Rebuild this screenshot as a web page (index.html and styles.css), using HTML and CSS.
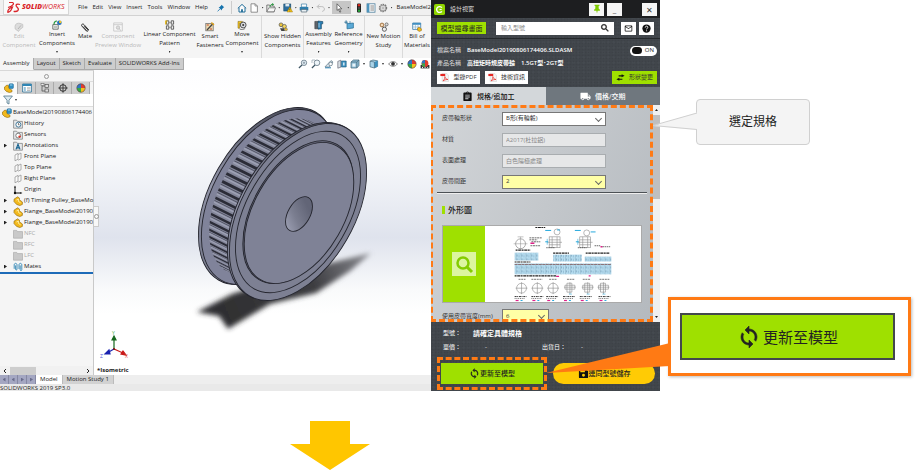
FILE: index.html
```html
<!DOCTYPE html>
<html lang="zh-Hant">
<head>
<meta charset="utf-8">
<title>更新至模型</title>
<link rel="stylesheet" href="styles.css">
</head>
<body>
<svg class="defs" aria-hidden="true">
  <defs>
    <symbol id="i-part" viewBox="0 0 10 10"><path d="M1 3.2 4.6.8 6.4 2v1.8L9.4 6v2.4L6.8 9.6 3.6 8.4 1 5.6Z" fill="#f2b91d" stroke="#8d6508" stroke-width=".6"/><path d="M3.4 4 5.4 3v2.4l2.2 1.4" fill="none" stroke="#fff1a8" stroke-width=".9"/></symbol>
    <symbol id="i-asm" viewBox="0 0 10 10"><path d="M.5 4 3 2l2 1v2.4l3 1.8v1.6L5.4 9.6 2.4 8.4.5 6.4Z" fill="#f2b91d" stroke="#8d6508" stroke-width=".6"/><rect x="5" y=".8" width="4.4" height="4.8" rx="1" fill="#2f8fc4" stroke="#145b85" stroke-width=".5"/><path d="M6 2h2.4" stroke="#bfe6fa" stroke-width=".8"/></symbol>
    <symbol id="i-insert" viewBox="0 0 10 10"><path d="M.8 4.6h5.4v4.6H.8z" fill="#eef3ee" stroke="#555" stroke-width=".8"/><path d="M2 4.4C2 2 3.4 1 5 1" fill="none" stroke="#2c9b3f" stroke-width="1.2"/><circle cx="7.4" cy="2.8" r="2.3" fill="#1f6fc0"/><circle cx="8.2" cy="2" r="1.2" fill="#f5c722"/><path d="M2 7h3" stroke="#777" stroke-width=".8"/></symbol>
    <symbol id="i-clip" viewBox="0 0 10 10"><path d="M8.8 8 4 2.6C2.8 1.2.8 2.6 1.8 4l4.6 5c1 .9 2.2 0 1.4-1.2L4.2 3.8M3 4.6l3.6 4" fill="none" stroke="#333" stroke-width="1"/></symbol>
    <symbol id="i-editc" viewBox="0 0 10 10"><path d="M1 4.4C1 1.6 4 .8 6 1.4l2.8 1v3L6 7.4 4.6 9.4 1.2 7Z" fill="#dcdcdc" stroke="#bbb" stroke-width=".7"/><path d="m4 7 3-3.6" stroke="#aaa" stroke-width=".8"/></symbol>
    <symbol id="i-preview" viewBox="0 0 10 10"><path d="M.7.9h8.6v8.2H.7zM.7 2.7h8.6" fill="#f7f7f7" stroke="#c4c4c4" stroke-width=".8"/><circle cx="5" cy="5.6" r="1.7" fill="#ddd" stroke="#bdbdbd" stroke-width=".8"/><path d="m6.2 6.8 1.6 1.6" stroke="#bbb"/></symbol>
    <symbol id="i-linear" viewBox="0 0 10 10"><g fill="#eee" stroke="#444" stroke-width=".8"><path d="M1.4.8h2.4v3.4H1.4zM6.2.8h2.4v3.4H6.2zM1.4 5.8h2.4v3.4H1.4zM6.2 5.8h2.4v3.4H6.2z"/></g><path d="M.8 4.4V1h1.6" stroke="#e6b400" fill="none" stroke-width="1.2"/><path d="M3.6 2.5h2.8M3.6 7.5h2.8" stroke="#777" stroke-width=".6"/></symbol>
    <symbol id="i-smart" viewBox="0 0 10 10"><rect x=".8" y="1.6" width="7.4" height="7.2" fill="#ecd9b0" stroke="#666" stroke-width=".7"/><path d="M2 8 7.6 2" stroke="#444" stroke-width="1.3"/><path d="M1.8 3h2M5 7h2" stroke="#c24a2a" stroke-width="1"/><path d="m6.4.6 2.6 2.4" stroke="#e3a51a" stroke-width="1.3"/></symbol>
    <symbol id="i-move" viewBox="0 0 10 10"><path d="M1 1.4h4.4v2H2.6v4.8H1z" fill="#f5c722" stroke="#77590a" stroke-width=".5"/><circle cx="6.2" cy="5" r="2.9" fill="#d8dbe0" stroke="#333" stroke-width=".8"/><circle cx="6.2" cy="5" r="1" fill="#333"/><path d="M2.6 9c2 .8 4 .6 5.6-.6" stroke="#555" fill="none" stroke-width=".8"/></symbol>
    <symbol id="i-hidden" viewBox="0 0 10 10"><circle cx="3" cy="2.8" r="1.9" fill="#e9c23b" stroke="#555" stroke-width=".7"/><circle cx="6.4" cy="4.4" r="2" fill="#f4d65a" stroke="#555" stroke-width=".7"/><path d="M2 6.2h4l1 2.8H3.4Z" fill="#444"/><circle cx="8" cy="7.4" r="1.4" fill="#f0bd2a" stroke="#666" stroke-width=".5"/></symbol>
    <symbol id="i-feat" viewBox="0 0 10 10"><path d="M.8 1.4h3v7.4h-3z" fill="#5e646c" stroke="#333" stroke-width=".5"/><path d="m4 1 4.8.6v2.2L7.4 4v4.8L4 9.2Z" fill="#2b7fb4" stroke="#143f5c" stroke-width=".6"/><path d="M5 3v4.6" stroke="#b8dcf0" stroke-width=".9"/></symbol>
    <symbol id="i-ref" viewBox="0 0 10 10"><path d="M3 3.6 9.4 3v5L3 8.8Z" fill="#5aa9d6" stroke="#246b93" stroke-width=".7"/><path d="M.4 2.2h3.4M2.1.4v3.6" stroke="#246b93" stroke-width=".9"/><path d="M6 1v3" stroke="#246b93" stroke-width=".6"/></symbol>
    <symbol id="i-motion" viewBox="0 0 10 10"><circle cx="3" cy="3" r="1.9" fill="#f4d9b8" stroke="#8e5a25" stroke-width=".8"/><circle cx="7.6" cy="2.4" r="1.5" fill="#ddd" stroke="#555" stroke-width=".7"/><circle cx="5.4" cy="7.2" r="2.1" fill="#eee" stroke="#555" stroke-width=".9"/><path d="m3.6 4.6 1 1.4M7 3.8l-.8 2" stroke="#555" stroke-width=".7"/></symbol>
    <symbol id="i-bill" viewBox="0 0 10 10"><path d="M.7 1h8v6.4h-8z" fill="#fff" stroke="#3679a8" stroke-width=".8"/><path d="M.7 1h8v1.8h-8z" fill="#3f8fc2"/><path d="M.7 5h8M3.4 2.6v4.8M6 2.6v4.8" stroke="#7aa9c8" stroke-width=".6"/><path d="M5.6 6 7 5.2l2.4 1.6v1.8L7.4 9.4 5.6 8.4Z" fill="#f2b91d" stroke="#8d6508" stroke-width=".5"/></symbol>
    <symbol id="i-home" viewBox="0 0 10 10"><path d="M.8 5.4 5 1.4l4.2 4M2 4.6V9h6V4.6" fill="#fff" stroke="#1d6a96" stroke-width="1"/><path d="M4.1 9V6.2h1.8V9" fill="#1d6a96"/></symbol>
    <symbol id="i-new" viewBox="0 0 10 10"><path d="M2 .8h4.2L8.4 3v6.2H2z" fill="#fff" stroke="#777" stroke-width=".8"/><path d="M6 .8V3h2.4" fill="none" stroke="#777" stroke-width=".7"/></symbol>
    <symbol id="i-open" viewBox="0 0 10 10"><path d="M.8 2h2.8l.8 1h3.8v5.8H.8z" fill="#e7e7e7" stroke="#666" stroke-width=".8"/><path d="m.8 8.8 2-4h6.8L8 8.8z" fill="#f7f7f7" stroke="#666" stroke-width=".7"/><path d="M4 4c0-2.2 1.4-2.8 3-2.6M6.4.4l1.2 1-1.2 1.2" fill="none" stroke="#24933a" stroke-width="1"/></symbol>
    <symbol id="i-save" viewBox="0 0 10 10"><rect x=".8" y="1" width="7" height="7" fill="#2c6e9e" stroke="#174866" stroke-width=".6"/><path d="M2.4 1h3.8v2.4H2.4z" fill="#dfeaf2"/><path d="M6.8 4 9.6 9H4z" fill="#f7c51c" stroke="#8a6a00" stroke-width=".4"/><path d="M6.8 5.6v1.6M6.8 7.8v.6" stroke="#222" stroke-width=".6"/></symbol>
    <symbol id="i-print" viewBox="0 0 10 10"><path d="M2.4 1h5.2v3H2.4z" fill="#fff" stroke="#3b7ea8" stroke-width=".7"/><path d="M.7 4h8.6v3.4H.7z" fill="#2f7fae"/><path d="M2.2 6.4h5.6V9H2.2z" fill="#e9f0f4" stroke="#3a5160" stroke-width=".6"/></symbol>
    <symbol id="i-undo" viewBox="0 0 10 10"><path d="M3.4 1.4 1.2 3.6l2.2 2.2M1.4 3.6h4.4c3.4 0 3.4 4.6.4 4.8" fill="none" stroke="#bdbdbd" stroke-width="1"/></symbol>
    <symbol id="i-cursor" viewBox="0 0 10 10"><path d="m3 .8 4.8 5H5.4l1.4 3-1 .4-1.4-3L3 7.4Z" fill="#fff" stroke="#444" stroke-width=".7"/></symbol>
    <symbol id="i-light" viewBox="0 0 10 10"><rect x="3" y=".4" width="4" height="9.2" rx="1" fill="#222"/><circle cx="5" cy="2.2" r="1.2" fill="#e02b20"/><circle cx="5" cy="5" r="1" fill="#555"/><circle cx="5" cy="7.8" r="1.2" fill="#27a43a"/></symbol>
    <symbol id="i-list" viewBox="0 0 10 10"><rect x="1" y=".8" width="8" height="8.4" fill="#fff" stroke="#4c7f9d" stroke-width=".8"/><path d="M1 .8h2.4v8.4H1z" fill="#4c94bd"/><path d="M4.4 3H8M4.4 5H8M4.4 7H8" stroke="#666" stroke-width=".8"/></symbol>
    <symbol id="i-gear" viewBox="0 0 10 10"><circle cx="5" cy="5" r="3.6" fill="none" stroke="#777" stroke-width="1.2" stroke-dasharray="1.6 .7"/><circle cx="5" cy="5" r="2.8" fill="#f2f2f2" stroke="#777" stroke-width=".7"/><circle cx="5" cy="5" r="1.1" fill="#fff" stroke="#777" stroke-width=".6"/></symbol>
    <symbol id="i-zoomfit" viewBox="0 0 10 10"><circle cx="6" cy="3.8" r="2.7" fill="#e3eef5" stroke="#667784" stroke-width=".8"/><path d="M4 6 .9 9" stroke="#3e5665" stroke-width="1.2"/><path d="M4.8 3.8h2.4M6 2.6V5" stroke="#667784" stroke-width=".6"/></symbol>
    <symbol id="i-zoomarea" viewBox="0 0 10 10"><path d="M1 1h3M1 1v3" stroke="#8fa2ae" stroke-width=".7"/><circle cx="6" cy="3.8" r="2.8" fill="#eef5f9" stroke="#667784" stroke-width=".8"/><path d="M4 6 .9 9" stroke="#3e5665" stroke-width="1.2"/></symbol>
    <symbol id="i-prev" viewBox="0 0 10 10"><path d="M1 7.8 7 1.6l2 1.4-4 5.2Z" fill="#d9e6ee" stroke="#5d7482" stroke-width=".7"/><path d="M1 8.8h6" stroke="#2f7fae" stroke-width="1"/><circle cx="6.6" cy="5" r="1.8" fill="#fff" stroke="#5d7482" stroke-width=".7"/></symbol>
    <symbol id="i-section" viewBox="0 0 10 10"><path d="m.8 2.400 3-1.200v7L.8 9.200Z" fill="#d7dde2" stroke="#556" stroke-width=".6"/><path d="M4.4 2h4.8v6H4.4z" fill="#3d91bf" stroke="#1d5a7c" stroke-width=".6"/><path d="M6 3.4h1.6v3H6z" fill="#cfe6f2"/></symbol>
    <symbol id="i-cube" viewBox="0 0 10 10"><path d="m1 3 2.400-2H9v5.600L6.800 9H1z" fill="#8dbdd6" stroke="#446577" stroke-width=".7"/><path d="M1 3h5.800v6M6.800 3 9 1" fill="none" stroke="#446577" stroke-width=".7"/><path d="M2.400 4.600h3v3h-3z" fill="#e9f4f9"/></symbol>
    <symbol id="i-solid" viewBox="0 0 10 10"><path d="M1 2.200 4 1l4.600.8v5.600L5.400 9 1 7.800Z" fill="#a9d3e8" stroke="#446577" stroke-width=".7"/><path d="M5.400 3 8.600 1.800v5.600L5.400 9Z" fill="#3d91bf"/><path d="m1 2.200 4.400.8v6" fill="none" stroke="#446577" stroke-width=".6"/></symbol>
    <symbol id="i-eye" viewBox="0 0 10 10"><path d="M.6 5C3 1.8 7 1.8 9.4 5 7 8 3 8 .6 5Z" fill="#fff" stroke="#555" stroke-width=".7"/><circle cx="5" cy="4.8" r="1.9" fill="#333"/></symbol>
    <symbol id="i-ball" viewBox="0 0 10 10"><circle cx="5" cy="5" r="4.2" fill="#e23c2e"/><path d="M5 .8A4.2 4.2 0 0 0 .8 5H5Z" fill="#2f78c4"/><path d="M.8 5A4.2 4.2 0 0 0 5 9.2V5Z" fill="#39a84a"/><path d="M5 9.2A4.2 4.2 0 0 0 9.2 5H5Z" fill="#f2c11f"/><circle cx="5" cy="5" r="4.2" fill="none" stroke="#444" stroke-width=".5"/></symbol>
    <symbol id="i-scene" viewBox="0 0 10 10"><path d="M.6 6h8.8v3.4H.6z" fill="#333"/><circle cx="5" cy="4.4" r="3.4" fill="#e23c2e"/><path d="M5 1a3.4 3.4 0 0 0-3.4 3.4H5Z" fill="#2f78c4"/><path d="M1.6 4.4A3.4 3.4 0 0 0 5 7.8V4.4Z" fill="#39a84a"/><path d="M2 8.4h1M4.6 8.4h1M7.2 8.4h1" stroke="#fff" stroke-width="1"/></symbol>
    <symbol id="i-props" viewBox="0 0 10 10"><path d="M.6 1h8.8v8H.6z" fill="#fff" stroke="#2b6e94" stroke-width=".8"/><path d="M.6 1h8.8v2H.6z" fill="#2f86b5"/><path d="M1.8 4.4h2v1h-2zM1.8 6.6h2v1h-2z" fill="#2f86b5"/><path d="M5 5h3.4M5 7.2h3.4" stroke="#888" stroke-width=".8"/></symbol>
    <symbol id="i-config" viewBox="0 0 10 10"><path d="M2 .8v7.4M2 3h3M2 8h3" fill="none" stroke="#555" stroke-width=".8"/><rect x="1" y=".5" width="3" height="2" fill="#eee" stroke="#555" stroke-width=".5"/><rect x="5" y="1.4" width="3.6" height="3" fill="#ddd" stroke="#555" stroke-width=".7"/><rect x="5" y="6" width="3.6" height="3" fill="#ddd" stroke="#555" stroke-width=".7"/></symbol>
    <symbol id="i-target" viewBox="0 0 10 10"><circle cx="5" cy="5" r="3.3" fill="none" stroke="#222" stroke-width=".9"/><path d="M5 .3v9.4M.3 5h9.4" stroke="#222" stroke-width=".8"/></symbol>
    <symbol id="i-filter" viewBox="0 0 10 10"><path d="M.6 1h8.8L6 5.2V9L4 8V5.2Z" fill="#dceaf2" stroke="#54788c" stroke-width=".8"/></symbol>
    <symbol id="i-hist" viewBox="0 0 10 10"><path d="M.6 1.2h3l1 1.2h4.8v6.8H.6z" fill="#e6e8ea" stroke="#777" stroke-width=".7"/><circle cx="5.4" cy="5.6" r="2.5" fill="#fff" stroke="#356f92" stroke-width=".9"/><path d="M5.4 4v1.8h1.2" stroke="#222" fill="none" stroke-width=".6"/></symbol>
    <symbol id="i-sens" viewBox="0 0 10 10"><path d="M.6 1.2h3l1 1.2h4.8v6.8H.6z" fill="#e6e8ea" stroke="#777" stroke-width=".7"/><circle cx="5.2" cy="5.6" r="2.4" fill="#fff" stroke="#666" stroke-width=".8"/><circle cx="6.6" cy="6.6" r="1.2" fill="#e03426"/></symbol>
    <symbol id="i-ann" viewBox="0 0 10 10"><path d="M.6 1.2h3l1 1.2h4.8v6.8H.6z" fill="#e6e8ea" stroke="#777" stroke-width=".7"/><path d="m3 8.4 2-5 2 5M3.6 6.8h2.8" fill="none" stroke="#14618f" stroke-width="1.2"/></symbol>
    <symbol id="i-plane" viewBox="0 0 10 10"><path d="m2 3 3-1.6v5.8L2 8.8ZM5 2.6 8 1v5.8L5 8.2" fill="#fafafa" stroke="#999" stroke-width=".8"/></symbol>
    <symbol id="i-origin" viewBox="0 0 10 10"><path d="M2 2v6h6" fill="none" stroke="#111" stroke-width="1"/><path d="M1 2.6h2L2 .6zM7.4 7v2l2-1z" fill="#111"/><circle cx="2" cy="8" r="1.2" fill="#111"/></symbol>
    <symbol id="i-folder" viewBox="0 0 10 10"><path d="M.5 1.4h3.2l.8 1.2h5v6.6h-9z" fill="#c9c9c9" stroke="#a5a5a5" stroke-width=".6"/></symbol>
    <symbol id="i-mates" viewBox="0 0 10 10"><path d="M1.2 6.8V3C1.2.8 4 .8 4 3v4c0 1.4-1.4 1.4-1.4 0V3.4M6 7V3c0-2.2 2.8-2.2 2.8 0v4.6c0 1.4-1.6 1.4-1.6 0V3.4" fill="none" stroke="#2f86b5" stroke-width=".9"/></symbol>
    <symbol id="i-pdf" viewBox="0 0 10 10"><path d="M2.4.4h5L9.4 2.4v7.2h-7z" fill="#f4f4f4" stroke="#bbb" stroke-width=".4"/><path d="M.4 1h5.4v2.4H.4z" fill="#e52521"/><path d="M3.4 8.8C5 7 5.6 5.4 5.4 4c.4 2 1.6 3 3.4 3.2-2 0-3.6.4-5.4 1.6Z" fill="none" stroke="#e52521" stroke-width=".8"/></symbol>
    <symbol id="i-sync" viewBox="0 0 24 24"><path d="M12 4V1L8 5l4 4V6c3.31 0 6 2.69 6 6 0 1.01-.25 1.97-.7 2.8l1.46 1.46A7.93 7.93 0 0 0 20 12c0-4.42-3.58-8-8-8zm0 14c-3.31 0-6-2.69-6-6 0-1.01.25-1.97.7-2.8L5.24 7.74A7.93 7.93 0 0 0 4 12c0 4.42 3.58 8 8 8v3l4-4-4-4v3z" fill="currentColor" stroke="currentColor" stroke-width=".6"/></symbol>
    <symbol id="i-search" viewBox="0 0 24 24"><path d="M15.5 14h-.79l-.28-.27A6.47 6.47 0 0 0 16 9.5 6.5 6.5 0 1 0 9.5 16c1.61 0 3.09-.59 4.23-1.57l.27.28v.79l5 4.99L20.49 19l-4.99-5zm-6 0C7.01 14 5 11.99 5 9.5S7.01 5 9.5 5 14 7.01 14 9.5 11.99 14 9.5 14z" fill="currentColor" stroke="currentColor"/></symbol>
    <symbol id="i-mail" viewBox="0 0 24 24"><path d="M20 4H4a2 2 0 0 0-2 2v12a2 2 0 0 0 2 2h16a2 2 0 0 0 2-2V6a2 2 0 0 0-2-2zm0 14H4V8l8 5 8-5v10zm-8-7L4 6h16l-8 5z" fill="#111"/></symbol>
    <symbol id="i-help" viewBox="0 0 24 24"><circle cx="12" cy="12" r="11" fill="#111"/><path d="M8.6 9.4c0-4.8 7-4.6 7-.6 0 2.6-3.4 2.8-3.4 5.6" fill="none" stroke="#fff" stroke-width="2.4"/><circle cx="12.2" cy="18" r="1.6" fill="#fff"/></symbol>
    <symbol id="i-clipb" viewBox="0 0 24 24"><path d="M19 3h-4.2a3 3 0 0 0-5.6 0H5a2 2 0 0 0-2 2v15a2 2 0 0 0 2 2h14a2 2 0 0 0 2-2V5a2 2 0 0 0-2-2zm-7 0a1 1 0 1 1 0 2 1 1 0 0 1 0-2zm2 15H7v-2h7v2zm3-4H7v-2h10v2zm0-4H7V8h10v2z" fill="#111"/></symbol>
    <symbol id="i-truck" viewBox="0 0 24 24"><path d="M20 8h-3V4H2a1.500 1.500 0 0 0-1 1.500V17h2a3 3 0 0 0 6 0h6a3 3 0 0 0 6 0h2v-5l-3-4zM6 18.500a1.500 1.500 0 1 1 0-3 1.500 1.500 0 0 1 0 3zm13.500-9 2 2.500H17V9.500h2.500zM18 18.500a1.500 1.500 0 1 1 0-3 1.500 1.500 0 0 1 0 3z" fill="#fff"/></symbol>
    <symbol id="i-swap" viewBox="0 0 24 18"><path d="M9 9.500 1 13.500 9 17.500V15h8v-3H9zM15 .5v2.500H7v3h8v2.500l8-4z" fill="#111"/></symbol>
    <symbol id="i-disk" viewBox="0 0 24 24"><path d="M17 2H4a2 2 0 0 0-2 2v16a2 2 0 0 0 2 2h16a2 2 0 0 0 2-2V7l-5-5zm-5 17a3.200 3.200 0 1 1 0-6.400A3.200 3.200 0 0 1 12 19zm3-10H5V5h10v4z" fill="#111"/></symbol>
    <symbol id="i-pin" viewBox="0 0 24 24"><path d="M6 2h12v2l-2 1v6l3 3v2h-5.500L12 23l-1.500-7H5v-2l3-3V5L6 4z" fill="#7fcb00"/></symbol>
  </defs>
</svg>

<main class="page">
  <div class="stage">
    <section class="cad" aria-label="SOLIDWORKS">
      <header class="cad-title">
        <div class="brand"><svg class="ds" viewBox="0 0 14 13"><path d="M2 1.500h3.500c2 .8 1 3.200-4.500 5M5.500 6c-1 3-3 5-4.600 5.400C.4 9.600 2 7 5.500 6Z" fill="none" stroke="#d9252a" stroke-width="1.200"/><path d="M13 3.500c-3-1-4.600.2-3.600 1.800 1 1.400 3 2.200 1.600 4.200-1 1-2.600 1.200-4.400.8" fill="none" stroke="#d9252a" stroke-width="1.300"/></svg><b>SOLID</b><span>WORKS</span></div>
        <nav class="menus"><a href="#">File</a><a href="#">Edit</a><a href="#">View</a><a href="#">Insert</a><a href="#">Tools</a><a href="#">Window</a><a href="#">Help</a></nav>
        <svg class="pushpin" viewBox="0 0 10 10"><path d="m5.600 1 3.400 3.200-1.200.4-1.600 2L6 8 2 4.200l1.400-.4L5.200 2Z" fill="#1673ad"/><path d="M3.600 6.200.8 9.200" stroke="#1673ad"/></svg>
        <div class="quick">
          <svg class="ic"><use href="#i-home"/></svg>
          <svg class="ic"><use href="#i-new"/></svg><i class="dd"></i>
          <svg class="ic"><use href="#i-open"/></svg><i class="dd"></i>
          <svg class="ic"><use href="#i-save"/></svg><i class="dd"></i>
          <svg class="ic"><use href="#i-print"/></svg><i class="dd"></i>
          <svg class="ic"><use href="#i-undo"/></svg><i class="dd"></i>
          <span class="picked"><svg class="ic"><use href="#i-cursor"/></svg><i class="dd"></i></span>
          <svg class="ic"><use href="#i-light"/></svg>
          <svg class="ic"><use href="#i-list"/></svg>
          <svg class="ic"><use href="#i-gear"/></svg><i class="dd"></i>
        </div>
        <span class="doc">BaseModel2</span>
      </header>

      <div class="ribbon">
        <button class="tool off"><svg class="ic"><use href="#i-editc"/></svg><span>Edit<br>Component</span></button>
        <button class="tool more"><svg class="ic"><use href="#i-insert"/></svg><span>Insert<br>Components</span><i class="dd"></i></button>
        <button class="tool"><svg class="ic"><use href="#i-clip"/></svg><span>Mate</span></button>
        <button class="tool off"><svg class="ic"><use href="#i-preview"/></svg><span>Component<br>Preview Window</span></button>
        <button class="tool more"><svg class="ic"><use href="#i-linear"/></svg><span>Linear Component<br>Pattern</span><i class="dd"></i></button>
        <button class="tool"><svg class="ic"><use href="#i-smart"/></svg><span>Smart<br>Fasteners</span></button>
        <button class="tool more"><svg class="ic"><use href="#i-move"/></svg><span>Move<br>Component</span><i class="dd"></i></button>
        <button class="tool sep"><svg class="ic"><use href="#i-hidden"/></svg><span>Show Hidden<br>Components</span></button>
        <button class="tool more sep"><svg class="ic"><use href="#i-feat"/></svg><span>Assembly<br>Features</span><i class="dd"></i></button>
        <button class="tool more"><svg class="ic"><use href="#i-ref"/></svg><span>Reference<br>Geometry</span><i class="dd"></i></button>
        <button class="tool sep"><svg class="ic"><use href="#i-motion"/></svg><span>New Motion<br>Study</span></button>
        <button class="tool sep"><svg class="ic"><use href="#i-bill"/></svg><span>Bill of<br>Materials</span></button>
      </div>

      <div class="tabrow">
        <nav class="tabs"><a href="#" class="on">Assembly</a><a href="#">Layout</a><a href="#">Sketch</a><a href="#">Evaluate</a><a href="#">SOLIDWORKS Add-Ins</a></nav>
        <div class="hud">
          <svg class="ic"><use href="#i-zoomfit"/></svg><svg class="ic"><use href="#i-zoomarea"/></svg><svg class="ic"><use href="#i-prev"/></svg><svg class="ic"><use href="#i-section"/></svg>
          <span><svg class="ic"><use href="#i-cube"/></svg><i class="dd"></i></span><span><svg class="ic"><use href="#i-solid"/></svg><i class="dd"></i></span><span><svg class="ic"><use href="#i-eye"/></svg><i class="dd"></i></span>
          <svg class="ic"><use href="#i-ball"/></svg><svg class="ic"><use href="#i-scene"/></svg>
        </div>
      </div>

      <div class="work">
        <aside class="side">
          <div class="grip"></div>
          <div class="side-tabs"><span class="on"><svg class="ic"><use href="#i-asm"/></svg></span><span><svg class="ic"><use href="#i-props"/></svg></span><span><svg class="ic"><use href="#i-config"/></svg></span><span><svg class="ic"><use href="#i-target"/></svg></span><span><svg class="ic"><use href="#i-ball"/></svg></span></div>
          <div class="filter"><svg class="ic"><use href="#i-filter"/></svg><i class="dd"></i></div>
          <ul class="tree">
            <li class="root"><svg class="ic"><use href="#i-asm"/></svg>BaseModel20190806174406</li>
            <li><svg class="ic"><use href="#i-hist"/></svg>History</li>
            <li><svg class="ic"><use href="#i-sens"/></svg>Sensors</li>
            <li class="kids"><svg class="ic"><use href="#i-ann"/></svg>Annotations</li>
            <li><svg class="ic"><use href="#i-plane"/></svg>Front Plane</li>
            <li><svg class="ic"><use href="#i-plane"/></svg>Top Plane</li>
            <li><svg class="ic"><use href="#i-plane"/></svg>Right Plane</li>
            <li><svg class="ic"><use href="#i-origin"/></svg>Origin</li>
            <li class="kids"><svg class="ic"><use href="#i-part"/></svg>(f) Timing Pulley_BaseMo</li>
            <li class="kids"><svg class="ic"><use href="#i-part"/></svg>Flange_BaseModel20190</li>
            <li class="kids"><svg class="ic"><use href="#i-part"/></svg>Flange_BaseModel20190</li>
            <li class="dim"><svg class="ic"><use href="#i-folder"/></svg>NFC</li>
            <li class="dim"><svg class="ic"><use href="#i-folder"/></svg>RFC</li>
            <li class="dim"><svg class="ic"><use href="#i-folder"/></svg>LFC</li>
            <li class="kids"><svg class="ic"><use href="#i-mates"/></svg>Mates</li>
          </ul>
          <div class="hscroll"><svg viewBox="0 0 4 6"><path d="M3 1 1 3l2 2" fill="none" stroke="#222"/></svg><i></i><svg viewBox="0 0 4 6"><path d="m1 1 2 2-2 2" fill="none" stroke="#222"/></svg></div>
          <div class="notch"></div>
        </aside>

        <div class="viewport">
          <svg class="model" viewBox="94 69 337 305" role="img" aria-label="Timing pulley">
            <defs>
              <filter id="soft" x="-20%" y="-20%" width="140%" height="140%"><feGaussianBlur stdDeviation="2.500"/></filter>
              <linearGradient id="shade" gradientUnits="userSpaceOnUse" x1="220" y1="320" x2="370" y2="250"><stop offset="0" stop-color="#2e2e30"/><stop offset=".6" stop-color="#3c3c40"/><stop offset="1" stop-color="#8b8c92"/></linearGradient>
              <linearGradient id="bore" gradientUnits="userSpaceOnUse" x1="290" y1="226" x2="308" y2="200"><stop offset="0" stop-color="#a3a6ba"/><stop offset=".5" stop-color="#7b7e90"/><stop offset="1" stop-color="#626577"/></linearGradient>
              <linearGradient id="rim" gradientUnits="userSpaceOnUse" x1="200" y1="280" x2="300" y2="105"><stop offset="0" stop-color="#5c5f70"/><stop offset=".5" stop-color="#9396a9"/><stop offset="1" stop-color="#4b4d5b"/></linearGradient>
            </defs>
            <path d="M197 311 232 293 330 262 371 252 350 270 316 292 270 303 228 328 219 315Z" fill="url(#shade)" filter="url(#soft)"/>
            <g stroke="#24252e" stroke-width=".9">
              <ellipse rx="56" ry="97" transform="translate(267 195) rotate(30)" fill="url(#rim)"/>
              <ellipse rx="55" ry="96" transform="translate(269 196) rotate(30)" fill="#80839a"/>
            </g>
            <g id="teeth"></g>
            <g stroke="#24252e" stroke-width=".9">
              <ellipse rx="56" ry="97" transform="translate(296 210) rotate(30)" fill="url(#rim)"/>
              <ellipse rx="56" ry="97" transform="translate(298 211) rotate(30)" fill="#7d8093"/>
              <ellipse rx="51" ry="88.500" transform="translate(298 211) rotate(30)" fill="none"/>
              <ellipse rx="45" ry="78" transform="translate(298 211) rotate(30)" fill="#606374"/>
              <ellipse rx="45" ry="77" transform="translate(299 212) rotate(30)" fill="#7f8296"/>
              <ellipse rx="11" ry="19" transform="translate(299 213) rotate(30)" fill="url(#bore)"/>
            </g>
            <g fill="none" stroke-width="1.200">
              <path d="M114 348v-10" stroke="#15671d"/><path d="m112 339 2-4 2 4z" fill="#15671d" stroke="#15671d"/>
              <path d="m114 348 9 4" stroke="#c91a1a"/><path d="m121 353 2-3 3 4z" fill="#c91a1a" stroke="#c91a1a"/>
              <path d="m114 348-7 4" stroke="#1a22b0"/><path d="m109 349 1 4-5 0z" fill="#1a22b0" stroke="#1a22b0"/>
              <circle cx="114" cy="348" r="1" fill="#7a1010" stroke="none"/>
            </g>
            <g class="axis"><text x="112" y="334" fill="#4cae4c">Y</text><text x="125" y="357" fill="#e04a3f">X</text><text x="100" y="357" fill="#4d55d6">Z</text></g>
          </svg>
          <p class="view-name">*Isometric</p>
        </div>
      </div>

      <div class="sheet-tabs"><span class="nav"><i></i><i></i><i></i><i></i></span><a href="#" class="on">Model</a><a href="#">Motion Study 1</a></div>
      <footer class="status">SOLIDWORKS 2019 SP3.0</footer>
    </section>

    <section class="panel" aria-label="設計視窗">
      <header class="p-title">
        <svg class="p-logo" viewBox="0 0 12 12"><rect width="12" height="12" rx="2" fill="#8fd400"/><path d="M8.600 4A3.200 3.200 0 1 0 8.600 8" fill="none" stroke="#fff" stroke-width="1.500"/><path d="M6 6h2.400" stroke="#fff" stroke-width="1.200"/></svg>
        <h1>設計視窗</h1>
        <button class="win" aria-label="pin"><svg><use href="#i-pin"/></svg></button>
        <button class="win low">_</button>
        <button class="win far">✕</button>
      </header>
      <div class="p-bar">
        <button class="lime">模型搜尋畫面</button>
        <label class="find"><input type="text" placeholder="輸入型號"><svg><use href="#i-search"/></svg></label>
        <button class="sq" aria-label="mail"><svg><use href="#i-mail"/></svg></button>
        <button class="sq" aria-label="help"><svg><use href="#i-help"/></svg></button>
      </div>
      <div class="p-info">
        <div class="line"><span>檔案名稱</span><b>BaseModel20190806174406.SLDASM</b><label class="switch"><input type="checkbox" checked><i></i>ON</label></div>
        <div class="line"><span>產品名稱</span><b>高扭矩時規皮帶輪　1.5GT型･2GT型</b></div>
        <div class="line acts"><button><svg><use href="#i-pdf"/></svg>型錄PDF</button><button><svg><use href="#i-pdf"/></svg>技術資訊</button><button class="lime change"><svg><use href="#i-swap"/></svg>形狀變更</button></div>
      </div>
      <nav class="p-tabs"><a href="#" class="on"><svg><use href="#i-clipb"/></svg>規格/追加工</a><a href="#"><svg><use href="#i-truck"/></svg>價格/交期</a></nav>
      <div class="scroll">
        <form class="form">
          <div class="row"><label for="shape">皮帶輪形狀</label><span class="pick"><select id="shape"><option>B形(有輪轂)</option></select></span></div>
          <div class="row"><label for="mat">材質</label><input id="mat" type="text" value="A2017(杜拉鋁)" disabled></div>
          <div class="row"><label for="surf">表面處理</label><input id="surf" type="text" value="白色陽極處理" disabled></div>
          <div class="row"><label for="pitch">皮帶間距</label><span class="pick must"><select id="pitch"><option>2</option></select></span></div>
          <hr>
          <h2>外形圖</h2>
          <div class="figure">
            <button type="button" class="lens" aria-label="zoom"><svg viewBox="0 0 24 24"><circle cx="11" cy="11" r="5.500" fill="none" stroke="#84cc00" stroke-width="2.500"/><path d="m15 15 5 5" stroke="#84cc00" stroke-width="3"/></svg></button>
            <svg class="drawing" viewBox="0 0 156 77" aria-hidden="true">
              <defs>
                <pattern id="cells" width="5" height="4" patternUnits="userSpaceOnUse"><rect width="5" height="4" fill="#b9e0f3"/><path d="M0 0v4" stroke="#6f8fa2" stroke-width=".7"/><path d="M1.500 1v2M3.400 1.500v2" stroke="#6791ac" stroke-width=".6"/><path d="M0 0h5" stroke="#9ac1d5" stroke-width=".4"/></pattern>
                <g id="wheel" fill="none" stroke="#888" stroke-width=".6"><rect x="2" y="1" width="11" height="11"/><path d="M0 6.500h15M5 1v11M10 1v11M2 4h11M2 9h11"/><path d="M0 3v6" stroke="#25a8dc"/></g>
                <g id="round" fill="none" stroke="#888" stroke-width=".6"><circle cx="6" cy="6" r="5"/><path d="M6 0v12M0 6h12"/></g>
                <g id="disc" fill="none" stroke="#888" stroke-width=".6"><path d="M0 5h12M6 0v12M3 1h5v9H3zM1 3h10v4H1z"/><path d="M5 12h3" stroke="#25a8dc"/></g>
                <g id="caption"><path d="M0 .5h12" stroke="#333" stroke-dasharray="2 .6 1 .8"/><path d="M0 2.500h10" stroke="#777" stroke-dasharray="1 .8"/><path d="M1 4.500h3" stroke="#e0218a" stroke-width="1.200"/><path d="M6 4.500h2" stroke="#25a8dc"/></g>
              </defs>
              <path d="M50 1.500h10M30 24.500h15M68 27.500h16M101 27.500h24M29 36.500h16M29 50.500h42" stroke="#222" stroke-width="1.200" stroke-dasharray="2 .6 3 .5"/>
              <circle cx="35" cy="18" r="5" fill="none" stroke="#888" stroke-width=".7"/><path d="M28 18h14M35 11v14M32 11h6" stroke="#888" stroke-width=".5"/>
              <path d="M44 12h13M44 14h8M46 16h9M45 20h10" stroke="#444" stroke-width=".8" stroke-dasharray="2 .6"/><path d="M45 17.500h4M71 51h3M116 21h2M104 50.500h2" stroke="#e0218a" stroke-width="1.400"/>
              <use href="#wheel" x="62" y="10"/><use href="#wheel" x="93" y="10"/>
              <circle cx="72" cy="6" r="3" fill="none" stroke="#888" stroke-width=".6"/><circle cx="102" cy="7" r="3" fill="none" stroke="#888" stroke-width=".6"/>
              <path d="M60 4.500h6M90 4.500h6M72 4h3M106 6h5M60 16h3M91 16h3" stroke="#25a8dc" stroke-width="1"/>
              <path d="M110 20h6M118 21h8M61 22h9M93 22h9" stroke="#444" stroke-width=".8" stroke-dasharray="1.500 .6"/>
              <rect x="29" y="27" width="24" height="8" fill="url(#cells)"/><rect x="68" y="29" width="29" height="7" fill="url(#cells)"/><rect x="100" y="31" width="27" height="5" fill="url(#cells)"/>
              <rect x="29" y="38" width="98" height="11" fill="url(#cells)"/><path d="M29 39h98" stroke="#8b7378" stroke-width="1.200" stroke-dasharray="3 .5"/>
              <path d="M33 54h7M46 54h11M64 54h8M82 54h8M98 54h8M115 54h10" stroke="#555" stroke-width=".8" stroke-dasharray="2 .7"/>
              <use href="#round" x="30" y="57"/><use href="#round" x="46" y="57"/><use href="#round" x="62" y="57"/><use href="#disc" x="79" y="57"/><use href="#disc" x="97" y="57"/><use href="#disc" x="113" y="57"/>
              <use href="#caption" x="29" y="71"/><use href="#caption" x="46" y="71"/><use href="#caption" x="61" y="71"/><use href="#caption" x="78" y="71"/><use href="#caption" x="95" y="71"/><use href="#caption" x="114" y="71"/>
            </svg>
          </div>
          <div class="row last"><label for="width">使用皮帶寬度(mm)</label><span class="pick must short"><select id="width"><option>6</option></select></span></div>
        </form>
        <div class="bar"><i class="up"></i><i class="thumb"></i><i class="down"></i></div>
      </div>
      <footer class="p-foot">
        <div class="sum"><span>型號：</span><strong>請確定具體規格</strong></div>
        <div class="sum"><span>單價：</span><span class="dash">-</span><span class="ship">出貨日：</span><span>-</span></div>
        <div class="go">
          <span class="ring"><button class="lime"><svg><use href="#i-sync"/></svg>更新至模型</button></span>
          <button class="keep"><svg><use href="#i-disk"/></svg>連同型號儲存</button>
        </div>
      </footer>
    </section>

    <div class="down-arrow"><svg viewBox="0 0 80 49"><path d="M20 0h40v23h20L40 49 0 23h20z" fill="#ffc600"/></svg></div>

    <aside class="notes">
      <div class="tip">選定規格<svg class="tail" viewBox="0 0 46 20"><path d="M45 .5v17.500L1 14Z" fill="#f4f4f4"/><path d="M45 1 1 13.500 45 17.500" fill="none" stroke="#d0d0d0"/></svg></div>
      <div class="big"><button class="lime"><svg><use href="#i-sync"/></svg>更新至模型</button><svg class="tail" viewBox="0 0 124 32"><path d="M0 30 124 0v23Z" fill="#ff7a14"/></svg></div>
    </aside>
  </div>
</main>
<script src="script.js"></script>
</body>
</html>
```

FILE: styles.css
```css
:root {
  --lime: #9fe000;
  --orange: #ff7a14;
  --slate: #41464b;
  --cjk: "Open Sans", "Noto Sans CJK TC", sans-serif;
}

* { box-sizing: border-box; }

body {
  margin: 0;
  background: #fff;
  color: #222;
  font: 6px/9px var(--cjk);
}

h1, h2, p, ul { margin: 0; padding: 0; }
ul { list-style: none; }
a { color: inherit; text-decoration: none; }
button, input, select { font: inherit; color: inherit; border: 0; margin: 0; padding: 0; }
svg { display: block; flex: none; }
.defs { position: absolute; width: 0; height: 0; }
.ic { width: 10px; height: 10px; }

.dd {
  flex: none;
  width: 2px;
  height: 2px;
  background: #333;
  clip-path: polygon(0 0, 100% 0, 50% 100%);
}

.stage {
  display: grid;
  grid-template-columns: minmax(0, 1fr) 229px 255px;
  grid-template-rows: auto auto;
}

/* CAD window */
.cad {
  display: flex;
  flex-direction: column;
  min-width: 0;
  overflow: hidden;
  background: #fff;
}

.cad-title {
  display: flex;
  align-items: center;
  height: 16px;
  background: #f0f0f0;
  border-bottom: 1px solid #d2d2d2;
  white-space: nowrap;
}

.brand {
  display: flex;
  align-items: center;
  align-self: stretch;
  gap: 1px;
  flex: none;
  width: 66px;
  margin-left: 3px;
  padding-left: 3px;
  background: #fafafa;
  border: 1px solid #d6d6d6;
  border-top: 0;
  color: #d9252a;
  font: italic 7px/14px "Open Sans", sans-serif;
}
.brand .ds { width: 14px; height: 13px; }
.brand b { font-weight: 800; }
.brand span { margin-left: -1px; }

.menus { display: flex; gap: 5px; margin-left: 9px; }
.pushpin { width: 8px; height: 8px; margin: 0 6px 0 9px; }

.quick {
  display: flex;
  align-items: center;
  justify-content: space-between;
  flex: 1;
  max-width: 166px;
  padding-left: 5px;
  border-left: 1px solid #ccc;
}
.picked {
  display: flex;
  align-items: center;
  gap: 3px;
  height: 13px;
  padding: 0 2px;
  background: #c6c6c6;
}
.doc { margin-left: 4px; }

.ribbon {
  display: grid;
  grid-template-columns: 38fr 38fr 18fr 48fr 55fr 26fr 38fr 42fr 30fr 31fr 38fr 29fr;
  height: 42px;
  background: #f5f5f5;
}
.tool {
  display: flex;
  flex-direction: column;
  align-items: center;
  justify-content: flex-start;
  min-width: 0;
  padding-top: 6px;
  background: none;
  white-space: nowrap;
}
.tool .dd { margin-top: 3px; }
.tool.more { padding-top: 4px; }
.tool.off { color: #b9b9b9; }
.tool.sep { border-left: 1px solid #dadada; }

.tabrow {
  display: flex;
  justify-content: space-between;
  height: 12px;
}
.tabs { display: flex; white-space: nowrap; line-height: 11px; }
.tabs a {
  padding: 0 3px;
  background: #cdcdcd;
  border-right: 1px solid #aaa;
  border-bottom: 1px solid #aaa;
}
.tabs .on { background: #f5f5f5; border-bottom-color: #f5f5f5; }

.hud { display: flex; align-items: center; gap: 3px; padding-right: 1px; }
.hud span { display: flex; align-items: center; gap: 3px; padding-right: 1px; }

.work { display: grid; grid-template-columns: 94px minmax(0, 1fr); height: 304px; }

.side {
  position: relative;
  z-index: 1;
  display: flex;
  flex-direction: column;
  min-width: 0;
  background: #f5f5f5;
  border-right: 1px solid #c9c9c9;
  border-top: 1px solid #d8d8d8;
}
.grip { display: grid; place-items: center; height: 10px; }
.grip::before, .notch::before {
  content: "";
  width: 3px;
  height: 3px;
  border: 1px solid #999;
  border-radius: 50%;
}
.side-tabs { display: flex; height: 13px; border-top: 1px solid #ddd; }
.side-tabs span {
  display: grid;
  place-items: center;
  width: 18px;
  background: #cdcdcd;
  border-right: 1px solid #aaa;
}
.side-tabs .on { background: #f8f8f8; }
.filter {
  display: flex;
  align-items: center;
  gap: 2px;
  height: 13px;
  padding-left: 3px;
  background: #fff;
  border-bottom: 1px solid #ddd;
}

.tree { border-bottom: 2px solid #1d6bb8; }
.tree li {
  display: flex;
  align-items: center;
  gap: 1px;
  height: 11px;
  padding-left: 13px;
  white-space: nowrap;
}
.tree .root { padding-left: 2px; }
.tree .dim { color: #aaa; }
.tree .kids { padding-left: 4px; }
.tree .kids::before {
  content: "";
  flex: none;
  width: 3px;
  height: 4px;
  margin-right: 5px;
  background: #222;
  clip-path: polygon(0 0, 100% 50%, 0 100%);
}

.hscroll {
  display: flex;
  align-items: center;
  gap: 3px;
  height: 9px;
  margin-top: auto;
  padding: 0 3px;
  background: #f1f1f1;
}
.hscroll i { width: 26px; height: 8px; background: #cdcdcd; }
.hscroll svg { width: 4px; height: 6px; }
.hscroll svg:last-child { margin-left: auto; }

.notch {
  position: absolute;
  top: 135px;
  right: -6px;
  display: grid;
  place-items: center;
  width: 5px;
  height: 21px;
  background: #f8f8f8;
  border: 1px solid #ccc;
  border-left: 0;
}

.viewport {
  position: relative;
  background: linear-gradient(#fdfdfe, #fff 10%, #fbfcfd 25%, #dfe3ed 55%, #f9fafb 72%, #fff 80%);
}
.model { width: 100%; height: 100%; }
.axis { font-size: 5px; }
.view-name {
  position: absolute;
  left: 3px;
  bottom: 0;
  font-size: 6px;
  font-weight: 700;
}

.sheet-tabs {
  display: flex;
  height: 10px;
  background: #eee;
  border-top: 1px solid #ccc;
  white-space: nowrap;
}
.sheet-tabs a {
  padding: 0 4px;
  background: #d2d2d2;
  border-right: 1px solid #bbb;
}
.sheet-tabs .on { background: #fff; }
.nav { display: flex; background: #a4a7c2; }
.nav i {
  display: grid;
  place-items: center;
  width: 9px;
  border-right: 1px solid #8588a3;
}
.nav i::before {
  content: "";
  width: 3px;
  height: 4px;
  background: #6a6d8c;
  clip-path: polygon(100% 0, 0 50%, 100% 100%);
}
.nav i:nth-child(n+3)::before { transform: scaleX(-1); }
.status {
  height: 7px;
  background: #e9e9e9;
  line-height: 8px;
}

/* Design panel */
.panel {
  display: flex;
  flex-direction: column;
  min-width: 0;
  background-color: var(--slate);
  background-image: radial-gradient(#3d4247 20%, transparent 60%), radial-gradient(#454a50 20%, transparent 60%);
  background-size: 3px 3px, 5px 5px;
  color: #fff;
}
.lime { background: var(--lime); color: #222; }

.p-title {
  display: flex;
  align-items: center;
  height: 18px;
  padding: 0 3px;
  background: #1d1e20;
}
.p-logo { width: 11px; height: 11px; }
.p-title h1 { margin: 0 auto 0 5px; font-size: 6px; font-weight: 400; color: #ddd; }
.win {
  display: grid;
  place-items: center;
  width: 15px;
  height: 13px;
  margin-left: 3px;
  background: #f5f5f5;
  color: #333;
  font-size: 8px;
}
.win svg { width: 10px; height: 10px; }
.win.far { margin-left: 20px; }

.p-bar {
  display: flex;
  align-items: center;
  gap: 7px;
  height: 21px;
  padding: 0 6px;
  border-bottom: 1px solid #25292c;
}
.p-bar .lime { width: 49px; height: 12px; font-size: 7px; white-space: nowrap; }
.find {
  display: flex;
  align-items: center;
  flex: 1;
  min-width: 0;
  height: 13px;
  margin-left: 3px;
  padding: 0 4px 0 5px;
  background: #fff;
  color: #222;
}
.find input { flex: 1; min-width: 0; background: none; }
.find input::placeholder { color: #888; }
.find svg { width: 10px; height: 10px; }
.sq { display: grid; place-items: center; width: 15px; height: 13px; background: #fff; }
.sq svg { width: 9px; height: 9px; }
.sq + .sq { margin-left: -4px; }

.p-info { padding: 5px 3px 0 6px; height: 48px; }
.line { display: flex; align-items: center; gap: 6px; height: 13px; white-space: nowrap; }
.line > span { color: #ddd; }
.line b { font-weight: 600; }
.switch {
  display: flex;
  align-items: center;
  gap: 3px;
  height: 10px;
  margin-left: auto;
  padding: 0 3px 0 2px;
  border-radius: 5px;
  background: #fff;
  color: #222;
}
.switch input { position: absolute; opacity: 0; width: 0; height: 0; }
.switch i { width: 10px; height: 7px; border-radius: 4px; background: #111; }
.acts { gap: 5px; height: 14px; }
.acts button {
  display: flex;
  align-items: center;
  justify-content: center;
  gap: 4px;
  width: 43px;
  height: 13px;
  background: #fff;
  color: #333;
}
.acts svg { width: 9px; height: 9px; }
.acts .change { width: 45px; margin-left: auto; background: var(--lime); }

.p-tabs { display: flex; height: 18px; font-size: 7px; font-weight: 500; }
.p-tabs a {
  display: flex;
  align-items: center;
  justify-content: center;
  gap: 4px;
  flex: 1;
  background: #6f777e;
}
.p-tabs .on { background: #d3d7da; color: #111; }
.p-tabs svg { width: 11px; height: 11px; }

.scroll { display: grid; grid-template-columns: minmax(0, 1fr) 7px; height: 217px; color: #333; }
.form {
  position: relative;
  padding: 3px 11px 0 11px;
  overflow: hidden;
  background: linear-gradient(115deg, #d2d5d8, #c3c7cb 50%, #b4b9be);
}
.form::after {
  content: "";
  position: absolute;
  inset: 0 0 0 -1px;
  border: 3px dashed var(--orange);
  pointer-events: none;
}
.row { display: flex; align-items: center; height: 21px; }
.row label { flex: 0 0 60px; white-space: nowrap; }
.row input, .pick {
  width: 104px;
  height: 14px;
  border: 1px solid #a9adb0;
  background: #e6e7e8;
}
.row input { padding: 0 3px; color: #888; }
.pick { position: relative; display: block; background: #fff; border-color: #777; }
.pick select {
  width: 100%;
  height: 100%;
  padding: 0 3px;
  appearance: none;
  background: none;
}
.pick::after {
  content: "";
  position: absolute;
  top: 3px;
  right: 4px;
  width: 4px;
  height: 4px;
  border: solid #666;
  border-width: 0 1px 1px 0;
  transform: rotate(45deg);
}
.pick.must { background: #ffffa6; }
.pick.short { width: 47px; }
hr { height: 2px; margin: 0 -5px; border: 0; border-top: 1px solid #4c5155; background: #eee; }
.form h2 {
  display: flex;
  align-items: center;
  gap: 3px;
  height: 31px;
  font-size: 8px;
  font-weight: 500;
  color: #222;
}
.form h2::before { content: ""; width: 3px; height: 8px; background: var(--lime); }
.figure { display: flex; height: 78px; background: #fff; border: 1px solid #aaa; }
.lens { display: grid; place-items: center; width: 42px; background: var(--lime); }
.lens svg { width: 24px; height: 24px; background: #dcf5a0; }
.drawing { flex: 1; min-width: 0; height: 76px; }
.row.last { height: 26px; }

.bar { display: flex; flex-direction: column; align-items: center; background: #f0f0f0; }
.bar i { flex: none; }
.up, .down { width: 3px; height: 2px; margin: 4px 0; background: #222; clip-path: polygon(50% 0, 100% 100%, 0 100%); }
.thumb { width: 7px; height: 84px; background: #bfbfbf; }
.down { margin-top: auto; transform: rotate(180deg); }

.p-foot { padding: 3px 5px 0 6px; flex: 1; }
.sum { display: flex; align-items: center; height: 16px; padding-left: 6px; white-space: nowrap; }
.sum > span:first-child { width: 30px; }
.sum strong { font-size: 7px; font-weight: 700; }
.sum + .sum { height: 13px; }
.sum .dash { margin-left: 12px; width: 57px; }
.ship { width: 39px; }
.go { display: flex; align-items: center; justify-content: space-between; margin-top: 3px; font-size: 7px; font-weight: 500; color: #222; }
.ring { padding: 3px 1px; border: 3px dashed var(--orange); }
.go button { display: flex; align-items: center; justify-content: center; width: 102px; height: 21px; white-space: nowrap; }
.go svg { width: 11px; height: 11px; }
.go .keep { background: #ffcb05; border-radius: 11px; }

/* Annotations */
.notes { position: relative; grid-column: 3; grid-row: 1; padding: 99px 4px 0 8px; }
.tip {
  position: relative;
  display: grid;
  place-items: center;
  width: 114px;
  height: 46px;
  margin-left: 28px;
  background: #f4f4f4;
  border: 1px solid #d0d0d0;
  border-radius: 4px;
  font-size: 12px;
  line-height: 18px;
}
.tail { position: absolute; }
.tip .tail { left: -45px; top: 12px; width: 46px; height: 20px; }
.big {
  position: relative;
  margin-top: 152px;
  padding: 13px 13px 13px 9px;
  border: 3px solid var(--orange);
  background: #fff;
  box-shadow: 1px 1px 3px #bbb;
}
.big .lime {
  display: flex;
  align-items: center;
  justify-content: center;
  gap: 2px;
  width: 100%;
  height: 47px;
  border: 2px solid #43484c;
  font-size: 15px;
  line-height: 20px;
}
.big .lime svg { width: 24px; height: 24px; }
.big .tail { left: -125px; top: 43px; width: 124px; height: 32px; }

.down-arrow {
  grid-column: 1 / 3;
  grid-row: 2;
  display: flex;
  justify-content: center;
  padding-top: 30px;
}
.down-arrow svg { width: 80px; height: 49px; }
```

FILE: script.js
```js
// Draws the tooth grooves on the visible half of the drum.
(function () {
  var group = document.getElementById('teeth');
  var radius = 86, count = 60, depth = [26, 13], centre = [270, 196];
  function at(deg, r) {
    var t = deg * Math.PI / 180;
    var minor = Math.cos(t) * r * 0.577, major = Math.sin(t) * r;
    return [centre[0] + minor * 0.866 + major * 0.5, centre[1] + minor * 0.5 - major * 0.866];
  }
  function strip(a, b, r, fill) {
    var p = at(a, r), q = at(b, r);
    var path = document.createElementNS('http://www.w3.org/2000/svg', 'path');
    path.setAttribute('d', 'M' + p + 'L' + q + 'l' + depth + 'L' + (p[0] + depth[0]) + ',' + (p[1] + depth[1]) + 'Z');
    path.setAttribute('fill', fill);
    group.appendChild(path);
  }
  var step = 360 / count;
  for (var a = 72; a < 282; a += step) {
    strip(a, a + step + 0.3, radius, '#84879a');
    strip(a, a + step * 0.32, radius, '#2b2c37');
    strip(a + step * 0.45, a + step * 0.54, radius, '#4a4c5c');
    strip(a + step * 0.6, a + step * 0.78, radius, '#9da0b4');
  }
})();
```
